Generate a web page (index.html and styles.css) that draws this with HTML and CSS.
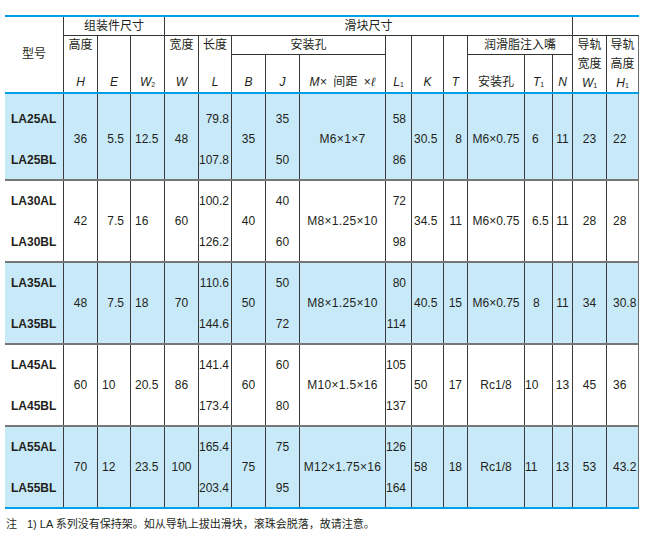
FILE: index.html
```html
<!DOCTYPE html>
<html lang="zh-CN">
<head>
<meta charset="utf-8">
<title>LA 系列尺寸表</title>
<link rel="stylesheet" href="styles.css">
</head>
<body>
<div class="page">
  <div class="spec">
    <div class="rule blue"></div>
    <div class="head">
      <div class="hc hm">型号</div>
      <div class="hc top cs3">组装件尺寸</div>
      <div class="hc top cs11">滑块尺寸</div>
      <div class="hc top cs2"></div>
      <div class="hc rs2"><span>高度</span><i>H</i></div>
      <div class="hc rs2 only"><i>E</i></div>
      <div class="hc rs2 only"><i>W<sub>2</sub></i></div>
      <div class="hc rs2"><span>宽度</span><i>W</i></div>
      <div class="hc rs2"><span>长度</span><i>L</i></div>
      <div class="hc grp cs3">安装孔</div>
      <div class="hc rs2 only"><i>L<sub>1</sub></i></div>
      <div class="hc rs2 only"><i>K</i></div>
      <div class="hc rs2 only"><i>T</i></div>
      <div class="hc grp cs3">润滑脂注入嘴</div>
      <div class="hc rs2"><span>导轨</span><span>宽度</span><i>W<sub>1</sub></i></div>
      <div class="hc rs2 edge"><span>导轨</span><span>高度</span><i>H<sub>1</sub></i></div>
      <div class="hc sub"><i>B</i></div>
      <div class="hc sub"><i>J</i></div>
      <div class="hc sub"><span class="mx"><i>M</i>× 间距 ×<i>ℓ</i></span></div>
      <div class="hc sub"><span>安装孔</span></div>
      <div class="hc sub"><i>T<sub>1</sub></i></div>
      <div class="hc sub"><i>N</i></div>
    </div>
    <div class="rule blue"></div>

    <div class="row shade first">
      <div class="cell model pair"><span>LA25AL</span><span>LA25BL</span></div>
      <div class="cell c">36</div>
      <div class="cell r6">5.5</div>
      <div class="cell l4">12.5</div>
      <div class="cell c">48</div>
      <div class="cell r2 pair"><span>79.8</span><span>107.8</span></div>
      <div class="cell c">35</div>
      <div class="cell c pair"><span>35</span><span>50</span></div>
      <div class="cell c m">M6×1×7</div>
      <div class="cell r5 pair"><span>58</span><span>86</span></div>
      <div class="cell l2">30.5</div>
      <div class="cell r5">8</div>
      <div class="cell c">M6×0.75</div>
      <div class="cell l7">6</div>
      <div class="cell c">11</div>
      <div class="cell c">23</div>
      <div class="cell l6">22</div>
    </div>
    <div class="rule gray"></div>

    <div class="row">
      <div class="cell model pair"><span>LA30AL</span><span>LA30BL</span></div>
      <div class="cell c">42</div>
      <div class="cell r6">7.5</div>
      <div class="cell l4">16</div>
      <div class="cell c">60</div>
      <div class="cell r2 pair"><span>100.2</span><span>126.2</span></div>
      <div class="cell c">40</div>
      <div class="cell c pair"><span>40</span><span>60</span></div>
      <div class="cell c m">M8×1.25×10</div>
      <div class="cell r5 pair"><span>72</span><span>98</span></div>
      <div class="cell l2">34.5</div>
      <div class="cell r5">11</div>
      <div class="cell c">M6×0.75</div>
      <div class="cell l7">6.5</div>
      <div class="cell c">11</div>
      <div class="cell c">28</div>
      <div class="cell l6">28</div>
    </div>
    <div class="rule gray"></div>

    <div class="row shade">
      <div class="cell model pair"><span>LA35AL</span><span>LA35BL</span></div>
      <div class="cell c">48</div>
      <div class="cell r6">7.5</div>
      <div class="cell l4">18</div>
      <div class="cell c">70</div>
      <div class="cell r2 pair"><span>110.6</span><span>144.6</span></div>
      <div class="cell c">50</div>
      <div class="cell c pair"><span>50</span><span>72</span></div>
      <div class="cell c m">M8×1.25×10</div>
      <div class="cell r5 pair"><span>80</span><span>114</span></div>
      <div class="cell l2">40.5</div>
      <div class="cell r5">15</div>
      <div class="cell c">M6×0.75</div>
      <div class="cell l8">8</div>
      <div class="cell c">11</div>
      <div class="cell c">34</div>
      <div class="cell l6">30.8</div>
    </div>
    <div class="rule gray"></div>

    <div class="row">
      <div class="cell model pair"><span>LA45AL</span><span>LA45BL</span></div>
      <div class="cell c">60</div>
      <div class="cell l4">10</div>
      <div class="cell l4">20.5</div>
      <div class="cell c">86</div>
      <div class="cell r2 pair"><span>141.4</span><span>173.4</span></div>
      <div class="cell c">60</div>
      <div class="cell c pair"><span>60</span><span>80</span></div>
      <div class="cell c m">M10×1.5×16</div>
      <div class="cell r5 pair"><span>105</span><span>137</span></div>
      <div class="cell l2">50</div>
      <div class="cell r5">17</div>
      <div class="cell c">Rc1/8</div>
      <div class="cell l0">10</div>
      <div class="cell c">13</div>
      <div class="cell c">45</div>
      <div class="cell l6">36</div>
    </div>
    <div class="rule gray"></div>

    <div class="row shade">
      <div class="cell model pair"><span>LA55AL</span><span>LA55BL</span></div>
      <div class="cell c">70</div>
      <div class="cell l4">12</div>
      <div class="cell l4">23.5</div>
      <div class="cell c">100</div>
      <div class="cell r2 pair"><span>165.4</span><span>203.4</span></div>
      <div class="cell c">75</div>
      <div class="cell c pair"><span>75</span><span>95</span></div>
      <div class="cell c m">M12×1.75×16</div>
      <div class="cell r5 pair"><span>126</span><span>164</span></div>
      <div class="cell l2">58</div>
      <div class="cell r5">18</div>
      <div class="cell c">Rc1/8</div>
      <div class="cell l0">11</div>
      <div class="cell c">13</div>
      <div class="cell c">53</div>
      <div class="cell l6">43.2</div>
    </div>
    <div class="rule blue"></div>
  </div>
  <p class="note"><span class="note-mark">注</span>1) LA 系列没有保持架。如从导轨上拔出滑块，滚珠会脱落，故请注意。</p>
</div>
</body>
</html>
```

FILE: styles.css
```css
:root {
  --cols: 58px 34px 33px 34px 34px 33px 34px 34px 86px 26px 32px 24px 57px 28px 20px 34px 33px;
  --ink: #231f20;
  --line: #3a3a3a;
  --edge: #6a6a6a;
}

* {
  box-sizing: border-box;
}

body {
  margin: 0;
  background: #ffffff;
  color: var(--ink);
  font-family: "Liberation Sans", "Noto Sans CJK SC", sans-serif;
}

.page {
  padding: 15px 0 0 5px;
}

.spec {
  width: 634px;
}

.rule {
  height: 2px;
}

.blue {
  background: #00a0e9;
}

.gray {
  background: #767676;
}

/* header */
.head {
  display: grid;
  grid-template-columns: var(--cols);
  grid-template-rows: 18px 19px 38px;
  font-size: 12px;
  line-height: 19px;
}

.hc {
  display: flex;
  flex-direction: column;
  align-items: center;
  border-left: 1px solid var(--line);
  white-space: nowrap;
  min-width: 0;
}

.hc i {
  font-style: italic;
}

.hc sub {
  font-size: 7px;
  font-style: normal;
  vertical-align: -1px;
  line-height: 0;
}

.mx {
  word-spacing: 2px;
  letter-spacing: 0.4px;
}

.hm {
  grid-row: span 3;
  justify-content: center;
  border-left: 0;
}

.top {
  justify-content: center;
}

.cs2 {
  grid-column: span 2;
}

.cs3 {
  grid-column: span 3;
}

.cs11 {
  grid-column: span 11;
}

.rs2 {
  grid-row: span 2;
  border-top: 1px solid #333333;
  justify-content: space-between;
}

.rs2.only {
  justify-content: flex-end;
}

.grp {
  border-top: 1px solid #333333;
  justify-content: center;
}

.sub {
  border-top: 1px solid #333333;
  justify-content: flex-end;
}

.edge {
  border-right: 1px solid var(--edge);
}

/* data rows */
.row {
  display: grid;
  grid-template-columns: var(--cols);
  height: 80px;
  font-size: 12px;
  line-height: 14px;
}

.row.first {
  height: 85px;
}

.row.first .cell {
  padding-top: 5px;
}

.shade {
  background: #c8e9f8;
}

.cell {
  display: flex;
  flex-direction: column;
  justify-content: center;
  border-left: 1px solid var(--line);
  white-space: nowrap;
  min-width: 0;
}

.cell:first-child {
  border-left: 0;
}

.cell:last-child {
  border-right: 1px solid var(--edge);
}

.pair {
  gap: 27px;
}

.model {
  font-weight: bold;
  align-items: flex-start;
  padding-left: 6px;
}

.c {
  align-items: center;
}

.m {
  letter-spacing: 0.3px;
}

.r2 {
  align-items: flex-end;
  padding-right: 2px;
}

.r5 {
  align-items: flex-end;
  padding-right: 5px;
}

.r6 {
  align-items: flex-end;
  padding-right: 6px;
}

.l0 {
  align-items: flex-start;
}

.l2 {
  align-items: flex-start;
  padding-left: 2px;
}

.l4 {
  align-items: flex-start;
  padding-left: 4px;
}

.l6 {
  align-items: flex-start;
  padding-left: 6px;
}

.l7 {
  align-items: flex-start;
  padding-left: 7px;
}

.l8 {
  align-items: flex-start;
  padding-left: 8px;
}

/* footnote */
.note {
  margin: 8px 0 0 1px;
  font-size: 11px;
  line-height: 14px;
}

.note-mark {
  margin-right: 10px;
}
```
